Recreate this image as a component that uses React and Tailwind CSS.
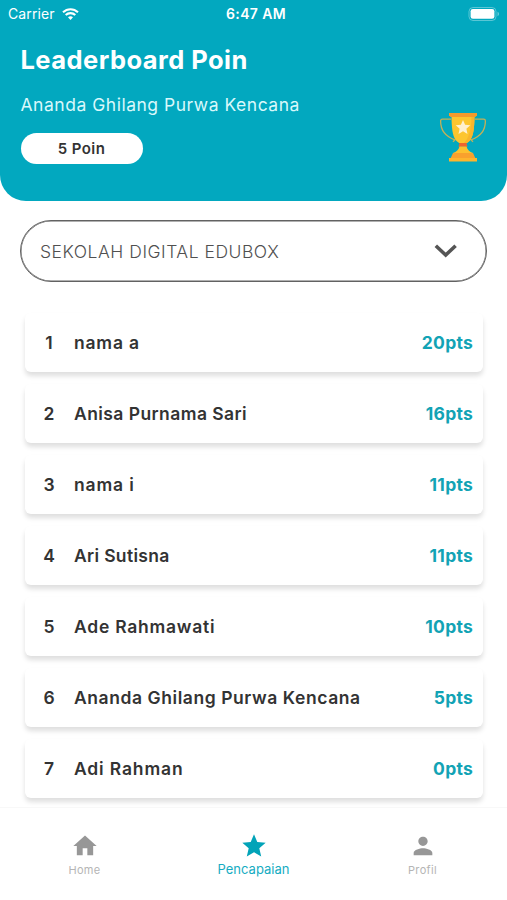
import { useState } from "react";
import { MdHome, MdStar, MdPerson } from "react-icons/md";

const players = [
    { name: "nama a", points: 20, spacing: "tracking-[0.8px]" },
    { name: "Anisa Purnama Sari", points: 16, spacing: "tracking-[0.43px]" },
    { name: "nama i", points: 11, spacing: "tracking-[0.85px]" },
    { name: "Ari Sutisna", points: 11, spacing: "tracking-[0.33px]" },
    { name: "Ade Rahmawati", points: 10, spacing: "tracking-[0.75px]" },
    { name: "Ananda Ghilang Purwa Kencana", points: 5, spacing: "tracking-[0.57px]" },
    { name: "Adi Rahman", points: 0, spacing: "tracking-[0.85px]" }
];

const tabs = [
    { id: "home", label: "Home", Icon: MdHome },
    { id: "achievement", label: "Pencapaian", Icon: MdStar },
    { id: "profile", label: "Profil", Icon: MdPerson }
];

function StatusBar() {
    return (
        <div className="grid h-7 grid-cols-3 items-center pl-2 pr-[7px] text-[14px] leading-none text-white">
            <div className="flex items-center gap-[7px]">
                <span className="tracking-[0.1px]">Carrier</span>
                <svg width="17" height="12" viewBox="0 0 17 12" fill="none" stroke="white" strokeWidth="2.1">
                    <path d="M1 4.3C5.3 .2 11.7 .2 16 4.3" />
                    <path d="M3.7 7.1c2.7-2.6 6.9-2.6 9.6 0" />
                    <path d="M6 9.2c1.4-1.3 3.6-1.3 5 0L8.5 11.9z" fill="white" stroke="none" />
                </svg>
            </div>
            <span className="pl-[4px] text-center font-semibold tracking-[0.35px]">6:47 AM</span>
            <svg className="justify-self-end" width="32" height="15" viewBox="0 0 32 15">
                <rect x="1" y=".5" width="27" height="13" rx="4" fill="none" stroke="white" strokeOpacity=".35" />
                <rect x="2.6" y="2" width="23.8" height="9.8" rx="2.3" fill="white" />
                <path d="M29.5 4.8c2 .7 2 3.7 0 4.4z" fill="white" fillOpacity=".4" />
            </svg>
        </div>
    )
}

function Trophy() {
    return (
        <svg width="48" height="50" viewBox="0 0 48 50">
            <g fill="none" stroke="#c6b057" strokeWidth="1.3">
                <path d="M12 7.2H3.4c-1.1 0-1.8.7-1.8 1.8 0 9.7 5.4 15.8 14.4 18.8l-2 2" />
                <path d="M36 7.2h8.6c1.1 0 1.8.7 1.8 1.8 0 9.7-5.4 15.8-14.4 18.8l2 2" />
            </g>
            <path d="M12.5 3h23c0 13-1.2 21-4.2 25-1.5 2-3.1 3-4.8 3.6h-5c-1.7-.6-3.3-1.6-4.8-3.6-3-4-4.2-12-4.2-25z" fill="#fdc52f" />
            <path d="M32.5 3h3c0 13-1.2 21-4.2 25-1.5 2-3.1 3-4.8 3.6h-2c5-5 8-13 8-28.6z" fill="#f8b52c" />
            <path d="M10 1h28v2.2L36.4 5H11.6L10 3.2z" fill="#f59a2c" />
            <path d="M20.5 31h7l1 3.8h-9z" fill="#f0642f" />
            <path d="M20.5 34.5h7c.8 3.4 3 5.2 6.5 6.6H14c3.5-1.4 5.7-3.2 6.5-6.6z" fill="#fdc02e" />
            <path d="M14 41h20l2.5 5.5h-25z" fill="#f9a12d" />
            <path d="M10 46h28v3.5H10z" fill="#fdb52d" />
            <path d="M24 7.9l2.1 4.8 5.2.6-3.9 3.5 1.1 5.1-4.5-2.6-4.5 2.6 1.1-5.1-3.9-3.5 5.2-.6z" fill="#fff0d0" />
        </svg>
    )
}

function PlayerCard({ rank, player }) {
    return (
        <li className="flex h-[59px] items-center rounded-[6px] bg-white pr-[10px] pl-[14px] text-[17.5px] leading-6 shadow-[0_4px_5px_rgba(0,0,0,0.13)]">
            <span className="w-5 text-center font-[560]">{rank}</span>
            <span className={"ml-[15px] flex-1 whitespace-nowrap font-[560] " + player.spacing}>{player.name}</span>
            <span className="font-bold tracking-[0.25px] text-[#12a3b5]">{player.points}pts</span>
        </li>
    )
}

function App() {
    const [activeTab, setActiveTab] = useState("achievement");

    return (
        <div className="flex h-[900px] w-[507px] flex-col overflow-hidden bg-white font-['Inter',sans-serif] text-[#333333]">

            <header className="h-[201px] shrink-0 rounded-b-[26px] bg-[#02a8bf]">
                <StatusBar />
                <div className="flex justify-between pr-5 pl-[20.5px] text-white">
                    <div>
                        <h1 className="mt-4 text-[25.5px] leading-8 font-bold tracking-[0.45px]">Leaderboard Poin</h1>
                        <p className="mt-[17px] text-[17.5px] leading-6 tracking-[0.52px] text-[#d9f8fb]">Ananda Ghilang Purwa Kencana</p>
                        <div className="mt-4 flex h-[31px] w-[122px] items-center justify-center rounded-full bg-white pt-px text-[15px] font-[560] tracking-[0.45px] text-[#333333]">5 Poin</div>
                    </div>
                    <div className="pt-[84px]">
                        <Trophy />
                    </div>
                </div>
            </header>

            {/* School picker */}

            <button type="button" className="mx-5 mt-[19px] flex h-[62px] shrink-0 items-center justify-between rounded-full border border-[#626262] pr-[29px] pl-[19px] text-[17.5px] text-[#505050] shadow-[inset_0_0_0_0.5px_#626262]">
                <span className="pt-[3px] font-light tracking-[0.53px]">SEKOLAH DIGITAL EDUBOX</span>
                <svg width="24" height="16" viewBox="0 0 24 16" fill="none" stroke="#555555" strokeWidth="3.6">
                    <path d="M2.8 2.7L12.7 12L22.6 2.7" />
                </svg>
            </button>

            {/* Ranking */}

            <main className="min-h-0 flex-1 overflow-hidden pt-[31px] pr-[24px] pl-[25px]">
                <ol className="flex flex-col gap-3">
                    {players.map((player, i) => (
                        <PlayerCard key={player.name} rank={i + 1} player={player} />
                    ))}
                </ol>
            </main>

            <nav className="grid h-[93px] shrink-0 grid-cols-3 border-t border-[#f8f8f8] bg-white">
                {tabs.map(({ id, label, Icon }) => (
                    <button
                        key={id}
                        type="button"
                        onClick={() => setActiveTab(id)}
                        className={activeTab == id
                            ? "flex flex-col items-center pt-[24px] text-[13px] text-[#16acc2]"
                            : "flex flex-col items-center pt-[24px] text-[11px] tracking-[0.35px] text-[#b5b5b5]"}
                    >
                        <Icon size={28} className={activeTab == id ? "text-[#02a3b8]" : "text-[#979797]"} />
                        <span className={activeTab == id ? "mt-px leading-4" : "mt-[2px] leading-4"}>{label}</span>
                    </button>
                ))}
            </nav>
        </div>
    )
}

export default App;
